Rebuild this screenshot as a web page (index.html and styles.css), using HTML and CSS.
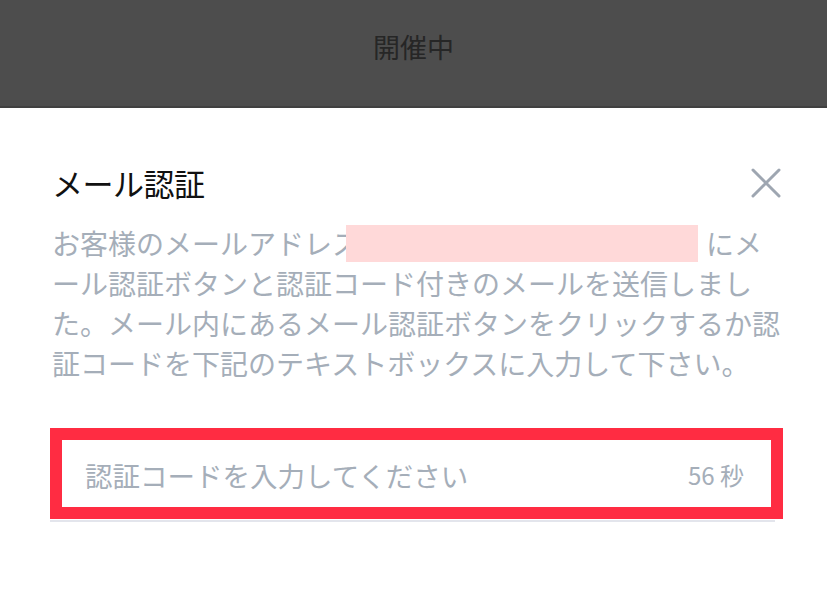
FILE: index.html
```html
<!DOCTYPE html>
<html lang="ja">
<head>
    <meta charset="UTF-8">
    <meta name="viewport" content="width=device-width, initial-scale=1.0">
    <title>メール認証</title>
    <link rel="stylesheet" href="styles.css">
</head>
<body>
    <div class="topbar">開催中</div>

    <div class="modal">
        <div class="modal-head">
            <h2 class="modal-title">メール認証</h2>
            <button class="close-btn" aria-label="閉じる">
                <svg width="30" height="30" viewBox="0 0 30 30">
                    <path d="M2 2 L28 28 M28 2 L2 28" stroke="#9ea6b1" stroke-width="3" stroke-linecap="round" fill="none"/>
                </svg>
            </button>
        </div>

        <p class="modal-text">お客様のメールアドレス<span class="email"></span>にメール認証ボタンと認証コード付きのメールを送信しました。メール内にあるメール認証ボタンをクリックするか認証コードを下記のテキストボックスに入力して下さい。</p>

        <div class="code-field">
            <span class="placeholder">認証コードを入力してください</span>
            <span class="timer">56 秒</span>
        </div>
        <div class="code-line"></div>
    </div>
</body>
</html>
```

FILE: styles.css
```css
:root {
    --muted: #a5aeb9;
    --red: #ff2c42;
}

body {
    margin: 0;
    font-family: "Noto Sans CJK JP", "Noto Sans", sans-serif;
    background: #ffffff;
    color: #111111;
}

.topbar {
    height: 106px;
    background: #4d4d4d;
    border-bottom: 2px solid #404040;
    color: #262626;
    font-size: 27px;
    line-height: 94px;
    text-align: center;
}

.modal {
    padding: 56px 47px 0 52px;
}

.modal-head {
    display: flex;
    justify-content: space-between;
    align-items: center;
}

.modal-title {
    margin: 0;
    font-size: 31px;
    font-weight: 400;
    line-height: 37px;
    letter-spacing: -0.5px;
}

.close-btn {
    border: none;
    background: none;
    padding: 0;
    width: 30px;
    height: 30px;
    margin-right: -1px;
    cursor: pointer;
}

.close-btn svg {
    display: block;
}

.modal-text {
    margin: 22px 0 0;
    font-size: 28px;
    line-height: 40px;
    color: var(--muted);
    word-break: break-all;
}

.email {
    display: inline-block;
    position: relative;
    width: 346px;
    height: 37px;
    vertical-align: top;
}

.email::before {
    content: "";
    position: absolute;
    left: -14px;
    right: 8px;
    top: 2px;
    bottom: -2px;
    background: #ffd9d9;
}

.code-field {
    margin: 45px 0 0 -2px;
    height: 65px;
    border: 12px solid var(--red);
    display: flex;
    align-items: center;
    justify-content: space-between;
    padding: 2px 27px 0 23px;
    box-sizing: content-box;
    width: 659px;
}

.placeholder {
    font-size: 27.5px;
    color: var(--muted);
}

.timer {
    font-size: 24px;
    color: var(--muted);
}

.code-line {
    height: 2px;
    width: 725px;
    margin: 1px 0 0 -2px;
    background: #e3e5ec;
}
```
